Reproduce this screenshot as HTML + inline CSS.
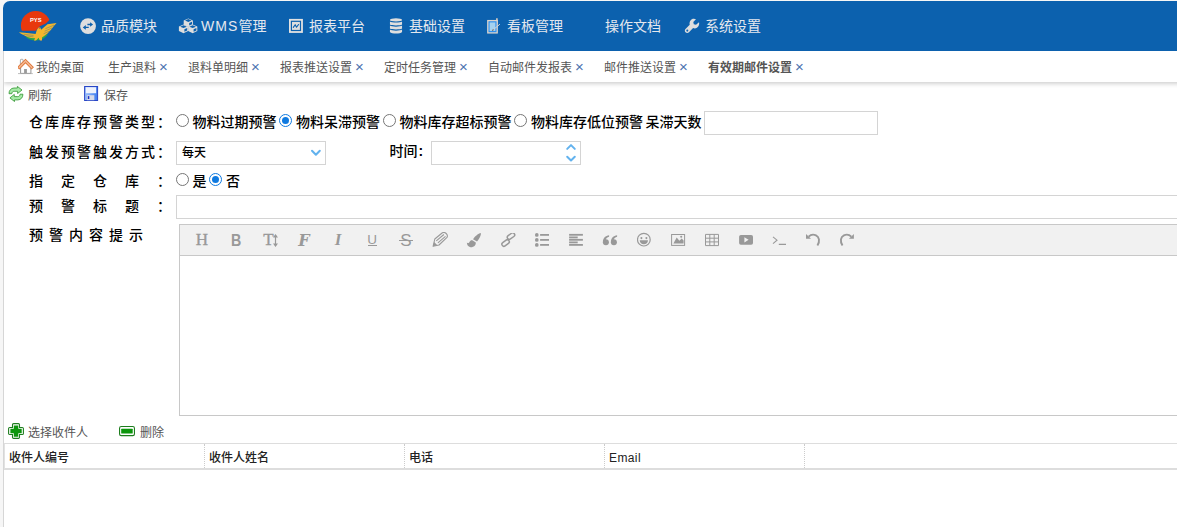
<!DOCTYPE html>
<html lang="zh-CN">
<head>
<meta charset="utf-8">
<title>有效期邮件设置</title>
<style>
*{box-sizing:border-box;margin:0;padding:0}
html,body{width:1177px;height:527px;overflow:hidden;background:#f6f6f6}
#page{position:absolute;left:3px;top:1px;width:1180px;height:530px;background:#fff;border-top-left-radius:7px}
body{font-family:"Liberation Sans","Noto Sans CJK SC",sans-serif;font-size:12px;color:#000;position:relative}
.abs{position:absolute;white-space:nowrap}
#hdr{position:absolute;left:3px;top:1px;width:1180px;height:50px;background:#0c61ae;border-top-left-radius:7px}
#lborder{position:absolute;left:3px;top:51px;width:1px;height:480px;background:#d6d6d6}
.nav{position:absolute;top:1px;height:50px;line-height:50px;font-size:14px;color:#e4e8ee;white-space:nowrap}
#tabs{position:absolute;left:4px;top:51px;width:1180px;height:31px;background:#fff;box-shadow:0 2px 4px rgba(0,0,0,.18);clip-path:inset(0 0 -10px 0)}
.tab{position:absolute;top:51px;height:31px;line-height:35px;font-size:12px;color:#555;white-space:nowrap}
.tab i{font-style:normal;font-weight:normal;color:#4b73b0;margin-left:3px;font-size:15px;line-height:12px}
.tab.on{font-weight:bold;color:#555}
.tb{position:absolute;font-size:12px;color:#555;white-space:nowrap;line-height:18px}
.lbl{position:absolute;left:29px;font-size:14px;font-weight:500;color:#000;white-space:nowrap;line-height:20px}
.rt{position:absolute;font-size:14px;font-weight:500;color:#000;white-space:nowrap;line-height:20px}
.radio{position:absolute;width:13px;height:13px;border:1px solid #767676;border-radius:50%;background:#fff}
.radio.on{border-color:#0f7ae0}
.radio.on::after{content:"";position:absolute;left:2px;top:2px;width:7px;height:7px;border-radius:50%;background:#0f7ae0}
.ei{position:absolute;top:230px;height:20px;line-height:20px;text-align:center;color:#999;white-space:nowrap}
.gh{position:absolute;top:449px;font-size:12px;font-weight:500;line-height:18px;color:#222;white-space:nowrap}
.gs{position:absolute;top:444px;width:0;height:24px;border-left:1px dotted #ccc}
.inp{position:absolute;border:1px solid #d4d4d4;background:#fff}
</style>
</head>
<body>
<div id="page"></div>
<div id="hdr"></div>
<div id="tabs"></div>
<div id="lborder"></div>

<!-- ICONS -->
<!-- logo -->
<svg class="abs" style="left:14px;top:6px" width="48" height="40" viewBox="14 6 48 40">
  <defs>
    <clipPath id="cr"><path d="M14 6H62V19.3H50.2L45.8 23.4L39.9 26.3L35.6 30.8H14Z"/></clipPath>
    <clipPath id="cg"><path d="M14 36.5H41V34.5H62V46H14Z"/></clipPath>
  </defs>
  <circle cx="35.7" cy="25.8" r="14.8" fill="#2aa54a" clip-path="url(#cg)"/>
  <circle cx="35.7" cy="25.8" r="14.8" fill="#e8380d" clip-path="url(#cr)"/>
  <path d="M18.9 32.2 L27 33 L35.6 34 L36.9 29.7 L38.6 27.4 L40.3 27.5 L41.1 29.7 L47.5 24.2 L56.6 22.9 L53.9 25.9 L51 29.7 L47.5 33.6 L44.1 36.1 L42 37.4 L42 40.5 L39.9 40.5 L38.6 37.8 L36 40.5 L33.9 40.5 L35.2 38.3 L31 37.9 L27.5 36.9 L24 35.3 L21 33.7 Z" fill="#f4b62c"/>
  <path d="M23.5 34.2 L33.5 35.5 M26.5 35.9 L33.5 36.9 M45.5 28.6 L54 25.2 M44.6 31.2 L52 28 M43.6 33.8 L49.6 31" stroke="#0c61ae" stroke-width=".45" fill="none" opacity=".8"/>
  <circle cx="39.4" cy="28.2" r=".5" fill="#e8380d"/>
  <text x="30" y="21.7" font-family="Liberation Sans, sans-serif" font-size="5" font-weight="bold" fill="#fff" textLength="11.5" lengthAdjust="spacingAndGlyphs">PYS</text>
</svg>
<!-- nav: exchange -->
<svg class="abs" style="left:80px;top:18px" width="17" height="17" viewBox="0 0 17 17">
  <circle cx="8.05" cy="8.05" r="7.9" fill="#dedede"/>
  <path d="M7.4 5.8 H10.1 V4.2 L13.1 6.5 L10.1 8.8 V7.2 H7.4Z M8.75 8.7 H5.8 V7.1 L2.8 9.4 L5.8 11.7 V10.1 H8.75Z" fill="#0c61ae"/>
</svg>
<!-- nav: cubes -->
<svg class="abs" style="left:178px;top:18px" width="20" height="16" viewBox="0 0 20 16"><path d="M10.3 0.4 L14.9 2.4 V6.8 L10.3 9.0 L5.7 6.8 V2.4Z" fill="#dedede"/><path d="M10.3 1.1 L13.6 2.5 L10.3 3.9 L7.0 2.5Z M11.2 5.0 L14.0 3.8 V6.3 L11.2 7.5Z" fill="#0c61ae"/><path d="M5.5 6.6 L10.1 8.6 V13.0 L5.5 15.2 L0.9 13.0 V8.6Z" fill="#dedede"/><path d="M5.5 7.3 L8.8 8.7 L5.5 10.1 L2.2 8.7Z M6.4 11.2 L9.2 10.0 V12.5 L6.4 13.7Z" fill="#0c61ae"/><path d="M14.7 6.6 L19.3 8.6 V13.0 L14.7 15.2 L10.1 13.0 V8.6Z" fill="#dedede"/><path d="M14.7 7.3 L18.0 8.7 L14.7 10.1 L11.4 8.7Z M15.6 11.2 L18.4 10.0 V12.5 L15.6 13.7Z" fill="#0c61ae"/></svg>
<!-- nav: report -->
<svg class="abs" style="left:288px;top:18px" width="16" height="16" viewBox="0 0 16 16">
  <rect x="1.9" y="1.8" width="12.1" height="12.2" fill="none" stroke="#e2e2e2" stroke-width="1.8"/>
  <rect x="4" y="3.9" width="7.9" height="8" fill="#dedede"/>
  <path d="M5.3 9.4 L7.2 6.7 L8.5 9.2 L10.6 6.5" fill="none" stroke="#0c61ae" stroke-width="1.1" stroke-linecap="round" stroke-linejoin="round"/>
</svg>
<!-- nav: database -->
<svg class="abs" style="left:389px;top:18px" width="14" height="16" viewBox="0 0 14 16">
  <g fill="#dedede">
    <ellipse cx="7" cy="1.95" rx="6.05" ry="1.65"/>
    <path d="M.95 3.4 C2.5 4.9 11.5 4.9 13.05 3.4 V6.5 C11.5 7.7 2.5 7.7 .95 6.5Z"/>
    <path d="M.95 7.6 C2.5 9 11.5 9 13.05 7.6 V10.5 C11.5 11.7 2.5 11.7 .95 10.5Z"/>
    <path d="M.95 11.6 C2.5 13 11.5 13 13.05 11.6 V14.1 C11.5 16.1 2.5 16.1 .95 14.1Z"/>
  </g>
</svg>
<!-- nav: kanban -->
<svg class="abs" style="left:486px;top:17px" width="16" height="18" viewBox="0 0 16 18">
  <path d="M10.9 1.2 V7" stroke="#cfc8c0" stroke-width="1.7"/>
  <rect x="1.8" y="3.6" width="9.4" height="12.3" fill="#2d8fee" stroke="#ddd5cc" stroke-width="1.3"/>
  <rect x="3.6" y="5.4" width="5.8" height="8.6" fill="#a5d2ef"/>
  <path d="M13.9 7.2 L6.2 13.6" stroke="#d6d6d6" stroke-width="1"/>
  <path d="M7.6 12.5 L6.2 13.6" stroke="#666" stroke-width="1.1"/>
</svg>
<!-- nav: wrench -->
<svg class="abs" style="left:684px;top:18px" width="16" height="16" viewBox="0 0 16 16">
  <path d="M12 1.3 L9.3 4 L9.8 6.2 L12 6.7 L15 4.3 C15.8 7 14 10.2 10.8 10.4 C10.2 10.4 9.6 10.3 9.1 10.1 L5 14.2 C4 15.2 2.4 15.2 1.5 14.2 C0.6 13.3 0.6 11.8 1.5 10.9 L5.7 6.8 C5 4.4 6.2 1.6 8.8 0.8 C9.9 0.5 11 0.6 12 1.3Z" fill="#dedede"/>
  <circle cx="3.3" cy="12.6" r="1.05" fill="#0c61ae"/>
</svg>
<!-- tab: home -->
<svg class="abs" style="left:18px;top:58px" width="16" height="17" viewBox="0 0 16 17">
  <rect x="2.4" y="1.3" width="2.7" height="6" rx=".8" fill="#fff" stroke="#9a9a9a" stroke-width=".8"/>
  <path d="M2.6 9 L7.5 4 L12.9 9 V15.4 H2.6Z" fill="#fff" stroke="#8a8a8a" stroke-width=".9"/>
  <rect x="6.1" y="11" width="2.8" height="4.4" fill="#9a9a9a"/>
  <path d="M0 15.6 H14.8" stroke="#aaa" stroke-width=".8"/>
  <path d="M1.4 9.2 L7.5 3 L13.6 9.2" fill="none" stroke="#dd6f2e" stroke-width="3.3" stroke-linecap="square"/>
  <path d="M1.4 9.2 L7.5 3 L13.6 9.2" fill="none" stroke="#f3b58e" stroke-width="1.7" stroke-linecap="square"/>
</svg>
<!-- toolbar: refresh -->
<svg class="abs" style="left:8px;top:86px" width="16" height="16" viewBox="0 0 16 16">
  <g fill="#a6eaa6" stroke="#3a9a3a" stroke-width=".85" stroke-linejoin="round">
    <path id="ra" d="M1 7.7 C0.9 4.6 3 2 6 2 H9.4 V0.4 L14 4 L9.6 7.5 V5.3 H6.2 C4.8 5.3 3.9 6.2 3.8 7.7Z"/>
    <path d="M1 7.7 C0.9 4.6 3 2 6 2 H9.4 V0.4 L14 4 L9.6 7.5 V5.3 H6.2 C4.8 5.3 3.9 6.2 3.8 7.7Z" transform="rotate(180 7.95 7.95)"/>
  </g>
</svg>
<!-- toolbar: save -->
<svg class="abs" style="left:84px;top:86px" width="15" height="16" viewBox="0 0 15 16">
  <defs><linearGradient id="sg" x1="0" y1="0" x2="1" y2="0"><stop offset="0" stop-color="#9cc0fb"/><stop offset="1" stop-color="#3c7aee"/></linearGradient></defs>
  <rect x=".6" y=".5" width="13" height="14" fill="url(#sg)" stroke="#2946c6" stroke-width="1"/>
  <rect x="1.9" y="1.2" width="10.2" height="6" fill="#eef2fd"/>
  <rect x="2.9" y="9.2" width="7.4" height="5" fill="#d6d9e8"/>
  <rect x="3.8" y="10.1" width="1.5" height="2.9" fill="#1830c8"/>
</svg>
<!-- toolbar2: add -->
<svg class="abs" style="left:8px;top:423px" width="16" height="16" viewBox="0 0 16 16">
  <path d="M5.6 .6 H10.4 Q11.5 .6 11.5 1.7 V4.5 H14.3 Q15.4 4.5 15.4 5.6 V10.4 Q15.4 11.5 14.3 11.5 H11.5 V14.3 Q11.5 15.4 10.4 15.4 H5.6 Q4.5 15.4 4.5 14.3 V11.5 H1.7 Q.6 11.5 .6 10.4 V5.6 Q.6 4.5 1.7 4.5 H4.5 V1.7 Q4.5 .6 5.6 .6Z" fill="#fff" stroke="#1e7d1e" stroke-width="1.1"/>
  <path d="M5.8 2.4 H10.3 V5.8 H13.7 V10.3 H10.3 V13.7 H5.8 V10.3 H2.4 V5.8 H5.8Z" fill="#0c960c"/>
</svg>
<!-- toolbar2: delete -->
<svg class="abs" style="left:119px;top:426px" width="16" height="11" viewBox="0 0 16 11">
  <rect x=".55" y=".55" width="14.9" height="9.1" rx="1.7" fill="#fff" stroke="#1e7d1e" stroke-width="1.1"/>
  <rect x="2.2" y="2.7" width="11.5" height="4.7" rx=".5" fill="#0c960c"/>
</svg>
<!-- NAV -->
<div class="nav" style="left:101px">品质模块</div>
<div class="nav" style="left:201px"><span style="letter-spacing:1.1px">WMS</span>管理</div>
<div class="nav" style="left:309px">报表平台</div>
<div class="nav" style="left:409px">基础设置</div>
<div class="nav" style="left:507px">看板管理</div>
<div class="nav" style="left:605px">操作文档</div>
<div class="nav" style="left:705px">系统设置</div>
<!-- TABS -->
<div class="tab" style="left:36px">我的桌面</div>
<div class="tab" style="left:108px">生产退料<i>×</i></div>
<div class="tab" style="left:188px">退料单明细<i>×</i></div>
<div class="tab" style="left:280px">报表推送设置<i>×</i></div>
<div class="tab" style="left:384px">定时任务管理<i>×</i></div>
<div class="tab" style="left:488px">自动邮件发报表<i>×</i></div>
<div class="tab" style="left:604px">邮件推送设置<i>×</i></div>
<div class="tab on" style="left:708px">有效期邮件设置<i>×</i></div>
<!-- TOOLBAR -->
<div class="tb" style="left:28px;top:86.5px">刷新</div>
<div class="tb" style="left:104px;top:86.5px">保存</div>
<div class="tb" style="left:28px;top:423.5px">选择收件人</div>
<div class="tb" style="left:140px;top:423.5px">删除</div>
<!-- FORM -->
<div class="lbl" style="top:112px;letter-spacing:2px">仓库库存预警类型：</div>
<div class="lbl" style="top:142px;letter-spacing:2px">触发预警触发方式：</div>
<div class="lbl" style="top:171px;letter-spacing:18px">指定仓库：</div>
<div class="lbl" style="top:196px;letter-spacing:18px">预警标题：</div>
<div class="lbl" style="top:225px;letter-spacing:6px">预警内容提示</div>

<div class="radio" style="left:176px;top:114px"></div>
<div class="rt" style="left:192.5px;top:112px">物料过期预警</div>
<div class="radio on" style="left:279px;top:114px"></div>
<div class="rt" style="left:296px;top:112px">物料呆滞预警</div>
<div class="radio" style="left:383px;top:114px"></div>
<div class="rt" style="left:399.5px;top:112px">物料库存超标预警</div>
<div class="radio" style="left:514px;top:114px"></div>
<div class="rt" style="left:531px;top:112px">物料库存低位预警</div>
<div class="rt" style="left:645.5px;top:112px">呆滞天数</div>
<div class="inp" style="left:704px;top:111px;width:174px;height:24px"></div>

<div class="inp" style="left:176px;top:141px;width:150px;height:24px"></div>
<div class="abs" style="left:182px;top:144px;font-size:12px;font-weight:500;line-height:18px">每天</div>
<svg class="abs" style="left:310px;top:148px" width="12" height="9" viewBox="0 0 12 9"><path d="M2 2.7 L5.9 6.7 L9.8 2.7" fill="none" stroke="#62b2ee" stroke-width="2" stroke-linecap="round" stroke-linejoin="round"/></svg>
<div class="rt" style="left:389.5px;top:141px">时间<span style="margin-left:1px;font-weight:bold">:</span></div>
<div class="inp" style="left:431px;top:141px;width:150px;height:24px"></div>
<svg class="abs" style="left:565px;top:143px" width="12" height="20" viewBox="0 0 12 20"><path d="M2.2 5.9 L6 2.1 L9.8 5.9 M2.2 13.7 L6 17.5 L9.8 13.7" fill="none" stroke="#62b2ee" stroke-width="2" stroke-linecap="round" stroke-linejoin="round"/></svg>

<div class="radio" style="left:176px;top:173px"></div>
<div class="rt" style="left:192.5px;top:171px">是</div>
<div class="radio on" style="left:209px;top:173px"></div>
<div class="rt" style="left:226px;top:171px">否</div>

<div class="inp" style="left:176px;top:195px;width:1010px;height:24px"></div>
<!-- EDITOR -->
<div class="abs" style="left:179px;top:224px;width:1010px;height:32px;background:#f1f1f1;border:1px solid #c8c8c8"></div>
<div class="abs" style="left:179px;top:255px;width:1010px;height:161px;background:#fff;border:1px solid #c8c8c8"></div>
<!-- EDITOR ICONS -->
<div class="ei" style="left:195px;width:14px;font-family:'Liberation Serif',serif;font-size:17px;-webkit-text-stroke:.4px #999">H</div>
<div class="ei" style="left:230px;width:11px;font-weight:bold;font-size:17px;transform:scaleX(.84);top:231px">B</div>
<div class="ei" style="left:263px;width:11px;font-family:'Liberation Serif',serif;font-size:17px;-webkit-text-stroke:.35px #999">T</div>
<svg class="abs" style="left:272px;top:234px" width="7" height="13" viewBox="0 0 7 13"><path d="M3.5 1.6V11.4" stroke="#999" stroke-width="1.2" fill="none"/><path d="M3.5 0L6 3.4H1Z M3.5 13L6 9.6H1Z" fill="#999"/></svg>
<div class="ei" style="left:298px;width:12px;font-family:'DejaVu Serif',serif;font-style:italic;font-weight:bold;font-size:16px;top:231px">F</div>
<div class="ei" style="left:333px;width:10px;font-family:'Liberation Serif',serif;font-style:italic;font-weight:bold;font-size:17px">I</div>
<div class="ei" style="left:367px;width:10px;font-size:13.5px;line-height:19px">U</div>
<div class="abs" style="left:367.5px;top:245px;width:9px;height:1.3px;background:#999"></div>
<div class="ei" style="left:400px;width:12px;font-size:17px;top:230.5px">S</div>
<div class="abs" style="left:399px;top:239.6px;width:14px;height:1.2px;background:#999"></div>
<!-- pencil -->
<svg class="abs" style="left:432px;top:232px" width="17" height="16" viewBox="0 0 17 16"><path d="M1.1 14.3 L2.8 7 L10.4 .8 C11.6 0 13.2 .5 14.2 1.5 C15.2 2.5 15.8 4 15 5.4 L7 13 Z M4.3 8.9 L11.9 2.5 M5.9 10.8 L13.5 4.4" fill="none" stroke="#999" stroke-width="1.1" stroke-linejoin="round"/><path d="M1.1 14.3 L2.1 10 L5.4 13.3Z" fill="#999"/></svg>
<!-- brush -->
<svg class="abs" style="left:466px;top:233px" width="16" height="15" viewBox="0 0 16 15"><path d="M14.7 .1 C15.6 1.5 13.5 6 11 8.6 L7 6.3 C9 3.5 12.5 .3 14.7 .1Z M6.3 7.3 L9.8 9.6 C10 12.5 7.5 14.6 4.5 14.3 C2 14 .8 11.5 .9 9.6 C2 10.8 3.2 10 3.6 8.8 C4.2 7.4 5.4 7 6.3 7.3Z" fill="#999"/></svg>
<!-- link -->
<svg class="abs" style="left:500px;top:233px" width="17" height="15" viewBox="0 0 17 15"><g fill="none" stroke="#999" stroke-width="1.5"><rect x="6.9" y="1.1" width="8.2" height="4" rx="2" transform="rotate(-36 11 3.1)"/><rect x="1.5" y="8" width="8.2" height="4" rx="2" transform="rotate(-36 5.6 10)"/></g></svg>
<!-- list -->
<svg class="abs" style="left:534px;top:233px" width="16" height="14" viewBox="0 0 16 14"><g fill="#999"><circle cx="2.8" cy="1.9" r="1.85"/><circle cx="2.8" cy="6.9" r="1.85"/><circle cx="2.8" cy="11.9" r="1.85"/><rect x="6.1" y="1" width="8.9" height="1.8"/><rect x="6.1" y="6" width="8.9" height="1.8"/><rect x="6.1" y="11" width="8.9" height="1.8"/></g></svg>
<!-- align -->
<svg class="abs" style="left:568px;top:233px" width="16" height="14" viewBox="0 0 16 14"><g fill="#999"><rect x="1.1" y=".9" width="13.8" height="1.8"/><rect x="1.1" y="3.5" width="8.6" height="1.8"/><rect x="1.1" y="5.9" width="13.8" height="1.8"/><rect x="1.1" y="8.5" width="8.6" height="1.8"/><rect x="1.1" y="11" width="13.8" height="1.8"/></g></svg>
<!-- quote -->
<svg class="abs" style="left:602px;top:233px" width="16" height="14" viewBox="0 0 16 14"><g fill="#999"><circle cx="3.9" cy="9.2" r="3"/><path d="M.9 9.2 C.8 5.2 3.6 2.6 7.1 2.3 L7.1 3.7 C5.2 4.2 3.9 5.4 3.9 6.8Z"/><circle cx="11.9" cy="9.2" r="3"/><path d="M8.9 9.2 C8.8 5.2 11.6 2.6 15.1 2.3 L15.1 3.7 C13.2 4.2 11.9 5.4 11.9 6.8Z"/></g></svg>
<!-- smile -->
<svg class="abs" style="left:637px;top:232px" width="15" height="16" viewBox="0 0 15 16"><circle cx="6.85" cy="7.65" r="6.35" fill="none" stroke="#999" stroke-width="1.2"/><circle cx="4.4" cy="6.1" r="1.05" fill="#999"/><circle cx="9.4" cy="6.1" r="1.05" fill="#999"/><path d="M2.7 8.2 H11 C10.8 10.6 9.2 12.3 6.85 12.3 C4.5 12.3 2.9 10.6 2.7 8.2Z" fill="#999"/></svg>
<!-- image -->
<svg class="abs" style="left:670px;top:233px" width="16" height="14" viewBox="0 0 16 14"><rect x="1.6" y="1.5" width="13" height="10.9" fill="none" stroke="#999" stroke-width="1"/><path d="M3.4 10.6 L6.7 4.6 L9.4 7.8 L11.7 5.6 L13.6 7.6 V10.6Z" fill="#999"/><circle cx="11.2" cy="3.7" r="1.05" fill="#999"/></svg>
<!-- table -->
<svg class="abs" style="left:704px;top:233px" width="16" height="14" viewBox="0 0 16 14"><path d="M1.5 1.4 H14.5 V12.6 H1.5Z M1.5 5.2 H14.5 M1.5 8.9 H14.5 M5.8 1.4 V12.6 M10.2 1.4 V12.6" fill="none" stroke="#999" stroke-width="1"/></svg>
<!-- play -->
<svg class="abs" style="left:738px;top:233px" width="16" height="14" viewBox="0 0 16 14"><rect x="1.1" y="1.9" width="13.9" height="9.9" rx="1.8" fill="#999"/><path d="M6.4 4.3 L10.6 6.85 L6.4 9.4Z" fill="#f1f1f1"/></svg>
<!-- terminal -->
<svg class="abs" style="left:772px;top:233px" width="16" height="14" viewBox="0 0 16 14"><path d="M1 3.8 L5 7.2 L1 10.6 M6.8 11.4 H14" fill="none" stroke="#999" stroke-width="1.1"/></svg>
<!-- undo -->
<svg class="abs" style="left:805px;top:232px" width="17" height="16" viewBox="0 0 17 16"><path d="M3.6 4.7 C5.6 2.7 8.6 2.2 11 3.4 C14.2 5 15.2 9.2 12.4 13.5" fill="none" stroke="#999" stroke-width="1.9"/><path d="M1 2 V6.8 H6Z" fill="#999"/></svg>
<!-- redo -->
<svg class="abs" style="left:839px;top:232px" width="17" height="16" viewBox="0 0 17 16"><g transform="translate(15.9 0) scale(-1 1)"><path d="M3.6 4.7 C5.6 2.7 8.6 2.2 11 3.4 C14.2 5 15.2 9.2 12.4 13.5" fill="none" stroke="#999" stroke-width="1.9"/><path d="M1 2 V6.8 H6Z" fill="#999"/></g></svg>
<!-- GRID -->
<div class="abs" style="left:4px;top:443px;width:1180px;height:27px;border-top:1px solid #ddd;border-bottom:2px solid #ddd;border-left:1px solid #e2e2e2;background:#fff"></div>
<div class="gh" style="left:9px">收件人编号</div>
<div class="gh" style="left:209px">收件人姓名</div>
<div class="gh" style="left:409px">电话</div>
<div class="gh" style="left:609px;letter-spacing:.4px">Email</div>
<div class="gs" style="left:204px"></div>
<div class="gs" style="left:404px"></div>
<div class="gs" style="left:604px"></div>
<div class="gs" style="left:804px"></div>
</body>
</html>
